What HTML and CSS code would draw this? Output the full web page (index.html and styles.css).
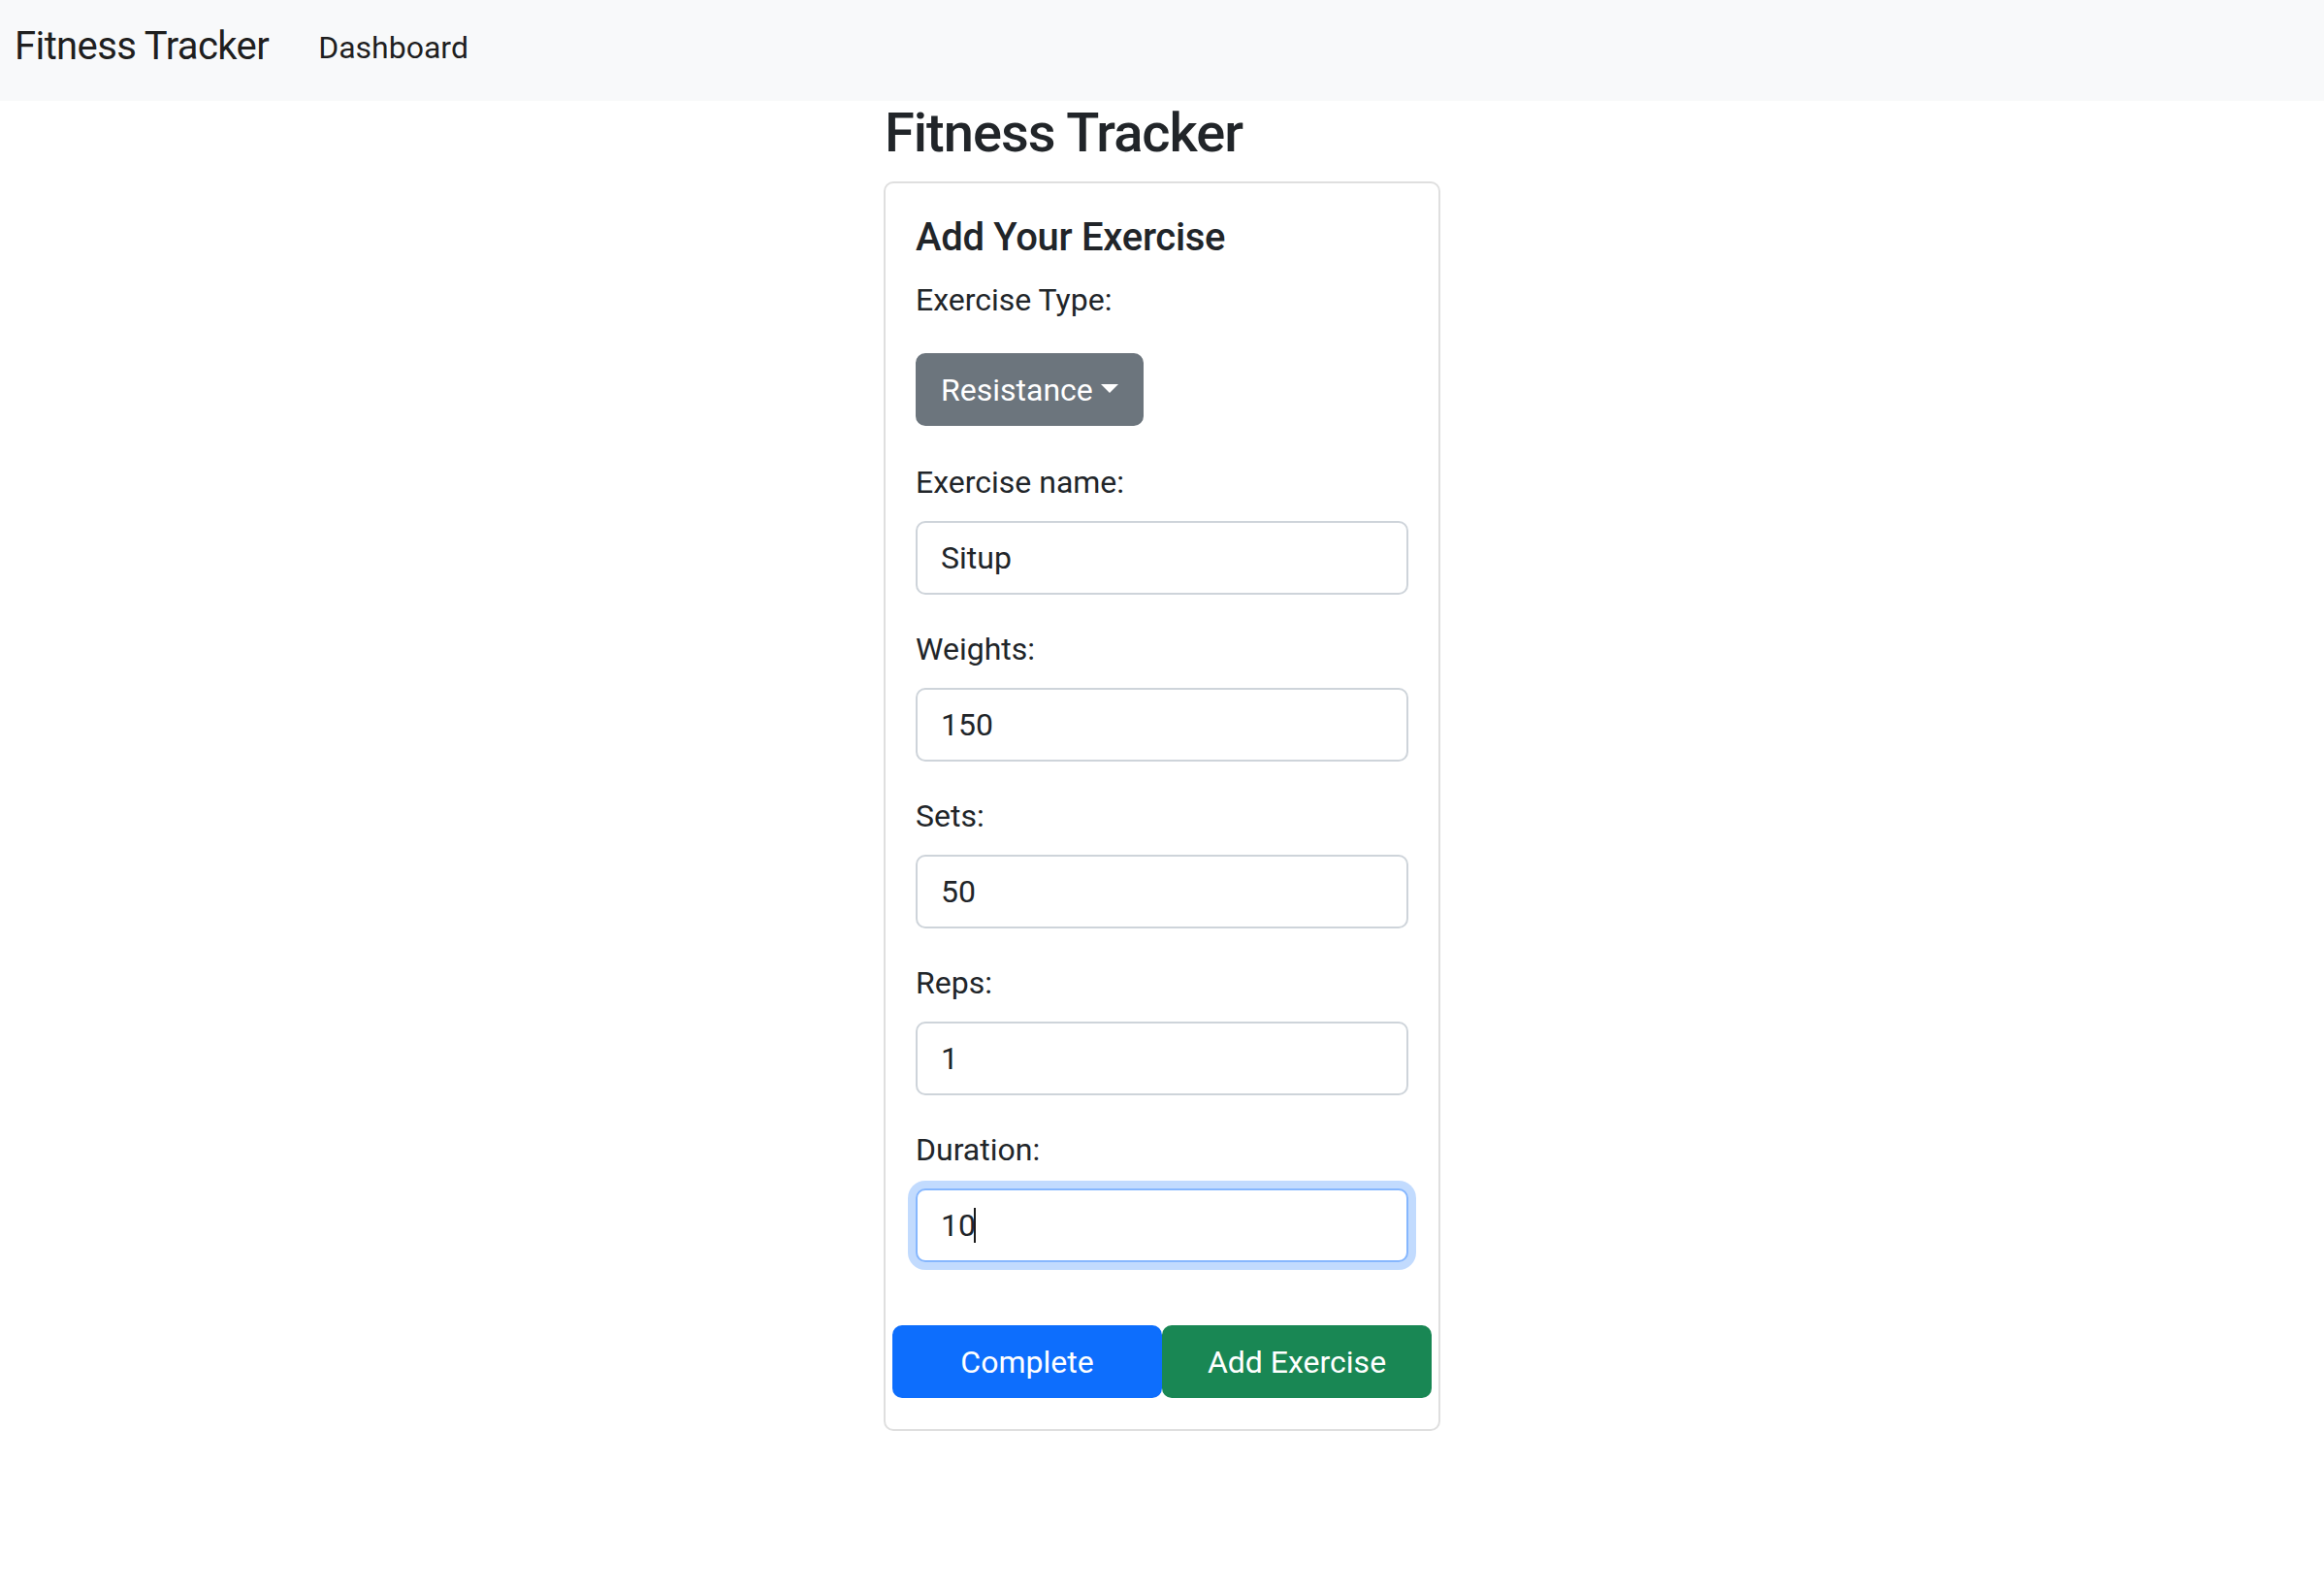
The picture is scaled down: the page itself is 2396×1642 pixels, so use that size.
FILE: index.html
```html
<!DOCTYPE html>
<html lang="en">
<head>
<meta charset="utf-8">
<title>Fitness Tracker</title>
<link rel="stylesheet" href="styles.css">
</head>
<body>
<nav class="navbar">
  <a class="brand" href="#">Fitness Tracker</a>
  <a class="nav-link" href="#">Dashboard</a>
</nav>
<main class="main">
  <h1 class="page-title">Fitness Tracker</h1>
  <div class="card">
    <h2 class="card-title">Add Your Exercise</h2>
    <div class="type-group">
      <label class="type-label">Exercise Type:</label>
      <button class="btn btn-secondary dropdown-toggle" type="button">Resistance</button>
    </div>
    <div class="field">
      <label class="field-label" for="name">Exercise name:</label>
      <input class="input" id="name" type="text" value="Situp">
    </div>
    <div class="field">
      <label class="field-label" for="weights">Weights:</label>
      <input class="input" id="weights" type="text" value="150">
    </div>
    <div class="field">
      <label class="field-label" for="sets">Sets:</label>
      <input class="input" id="sets" type="text" value="50">
    </div>
    <div class="field">
      <label class="field-label" for="reps">Reps:</label>
      <input class="input" id="reps" type="text" value="1">
    </div>
    <div class="field">
      <label class="field-label" for="duration">Duration:</label>
      <div class="input-wrap">
        <input class="input input-focused" id="duration" type="text" value="10">
        <span class="text-caret"></span>
      </div>
    </div>
    <div class="actions">
      <button class="btn btn-primary" type="button">Complete</button>
      <button class="btn btn-success" type="button">Add Exercise</button>
    </div>
  </div>
</main>
</body>
</html>
```
FILE: styles.css
```css
* {
  box-sizing: border-box;
}

body {
  margin: 0;
  font-family: Roboto, "Liberation Sans", Arial, sans-serif;
  font-size: 32px;
  line-height: 1.5;
  color: #212529;
  background: #ffffff;
}

.navbar {
  height: 104px;
  background: #f8f9fa;
  display: flex;
  align-items: center;
  padding-left: 15px;
}

.brand {
  font-size: 40px;
  line-height: 60px;
  letter-spacing: -0.6px;
  color: rgba(0, 0, 0, 0.9);
  text-decoration: none;
  margin-right: 35px;
  position: relative;
  top: -4px;
}

.nav-link {
  font-size: 32px;
  line-height: 48px;
  color: rgba(0, 0, 0, 0.88);
  text-decoration: none;
  padding-left: 16px;
  position: relative;
  top: -3px;
}

.main {
  width: 574px;
  margin: 0 auto;
}

.page-title {
  font-size: 56px;
  font-weight: 500;
  line-height: 1.2;
  letter-spacing: -1px;
  margin: 0 0 16px 0;
  padding-left: 1px;
}

.card {
  border: 2px solid #dfdfdf;
  border-radius: 10px;
  padding: 32px 31px;
}

.card-title {
  font-size: 40px;
  font-weight: 500;
  line-height: 1.2;
  letter-spacing: -0.3px;
  margin: 0 0 16px 0;
}

.type-group {
  margin-bottom: 34px;
}

.type-label {
  display: block;
  margin-bottom: 31px;
}

.field {
  margin-bottom: 32px;
}

.field-label {
  display: block;
  margin-bottom: 16px;
}

.input {
  display: block;
  width: 100%;
  height: 76px;
  padding: 12px 24px;
  font-family: inherit;
  font-size: 32px;
  line-height: 48px;
  color: #212529;
  background: #ffffff;
  border: 2px solid #ced4da;
  border-radius: 10px;
  outline: none;
}

.input-wrap {
  position: relative;
}

.input-focused {
  border-color: #86b7fe;
  box-shadow: 0 0 0 8px rgba(13, 110, 253, 0.25);
}

.text-caret {
  position: absolute;
  left: 60px;
  top: 20px;
  width: 2px;
  height: 36px;
  background: #1a1a1a;
}

.btn {
  font-family: inherit;
  font-size: 32px;
  line-height: 48px;
  padding: 12px 24px;
  border: 2px solid transparent;
  border-radius: 10px;
  color: #ffffff;
  cursor: pointer;
  height: 75px;
}

.btn-secondary {
  background: #6c757d;
  border-color: #6c757d;
}

.dropdown-toggle::after {
  content: "";
  display: inline-block;
  margin-left: 0.255em;
  vertical-align: 0.255em;
  border-top: 0.3em solid #ffffff;
  border-right: 0.3em solid transparent;
  border-left: 0.3em solid transparent;
  border-bottom: 0;
}

.actions {
  display: flex;
  margin: 65px -24px 0 -24px;
}

.actions .btn {
  flex: 1 1 0;
  text-align: center;
}

.btn-primary {
  background: #0d6efd;
  border-color: #0d6efd;
}

.btn-success {
  background: #198754;
  border-color: #198754;
}
```
